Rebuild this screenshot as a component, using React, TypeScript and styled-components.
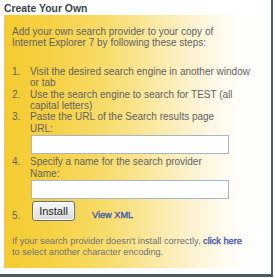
import React from "react"
import styled, { createGlobalStyle } from "styled-components"

const Global = createGlobalStyle`
  html, body {
    margin: 0;
    padding: 0;
    background: #ffffff;
  }
`

const Frame = styled.div`
  width: 271px;
  height: 274px;
  background: #ffffff;
  border-right: 2px solid #4e5a66;
  border-bottom: 3px solid #4e5a66;
  box-sizing: content-box;
  font-family: "Liberation Sans", Arial, sans-serif;
  display: flex;
  flex-direction: column;
`

const Heading = styled.h3`
  margin: 3px 0 0 4px;
  font-size: 10.4px;
  line-height: 12px;
  font-weight: bold;
  color: #3a434c;
`

const Panel = styled.div`
  margin: 0 0 0 4px;
  width: 263px;
  height: 253px;
  box-sizing: border-box;
  padding: 11px 0 0 8px;
  background: linear-gradient(
    to right,
    #f4cb30 0%,
    #f6d247 20%,
    #f8dd6f 40%,
    #fbebad 60%,
    #fdf7e2 78%,
    #fffefb 90%,
    #ffffff 100%
  );
  color: #626262;
  font-size: 10px;
  line-height: 11.4px;
`

const Intro = styled.p`
  margin: 0 0 17px 0;
`

const Steps = styled.ol`
  margin: 0;
  padding: 0;
  list-style: none;
  display: flex;
  flex-direction: column;
`

const Step = styled.li<{ $gap?: number }>`
  display: grid;
  grid-template-columns: 18px 1fr;
  margin-top: ${p => p.$gap ?? 0}px;
`

const Num = styled.span<{ $bottom?: boolean }>`
  white-space: nowrap;
  align-self: ${p => (p.$bottom ? "end" : "start")};
`

const Body = styled.div`
  display: flex;
  flex-direction: column;
`

const Field = styled.input`
  width: 198px;
  height: 19px;
  box-sizing: border-box;
  margin: 1px 0 0 1px;
  border: 1px solid #a7b7c8;
  background: #ffffff;
  outline: none;
`

const InstallRow = styled.div`
  display: flex;
  align-items: flex-end;
  gap: 17px;
`

const InstallButton = styled.button`
  width: 43px;
  height: 20px;
  margin-left: 2px;
  padding: 0;
  border: 1px solid #6f6f6f;
  border-radius: 3px;
  background: linear-gradient(to bottom, #f8f8f8 0%, #ececec 50%, #dadada 100%);
  box-shadow: inset 0 0 0 1px #ffffff;
  font-family: "Liberation Sans", Arial, sans-serif;
  font-size: 11px;
  color: #1e1e1e;
`

const Link = styled.a<{ $size?: number }>`
  color: #3f58ad;
  text-decoration: none;
  -webkit-text-stroke: 0.35px #3f58ad;
  ${p => (p.$size ? `font-size: ${p.$size}px;` : "")}
`

const Footer = styled.p`
  margin: 15px 0 0 0;
  color: #727272;
  font-size: 9.2px;
`

export default function App() {
  return (
    <>
      <Global />
      <Frame>
        <Heading>Create Your Own</Heading>
        <Panel>
          <Intro>
            Add your own search provider to your copy of
            <br />
            Internet Explorer 7 by following these steps:
          </Intro>
          <Steps>
            <Step>
              <Num>1.</Num>
              <Body>
                <span>Visit the desired search engine in another window</span>
                <span>or tab</span>
              </Body>
            </Step>
            <Step>
              <Num>2.</Num>
              <Body>
                <span>Use the search engine to search for TEST (all</span>
                <span>capital letters)</span>
              </Body>
            </Step>
            <Step>
              <Num>3.</Num>
              <Body>
                <span>Paste the URL of the Search results page</span>
                <span>URL:</span>
                <Field type="text" />
              </Body>
            </Step>
            <Step $gap={2}>
              <Num>4.</Num>
              <Body>
                <span>Specify a name for the search provider</span>
                <span>Name:</span>
                <Field type="text" />
              </Body>
            </Step>
            <Step $gap={2}>
              <Num $bottom>5.</Num>
              <InstallRow>
                <InstallButton>Install</InstallButton>
                <Link href="#" $size={9.2}>View XML</Link>
              </InstallRow>
            </Step>
          </Steps>
          <Footer>
            If your search provider doesn't install correctly,{" "}
            <Link href="#">click here</Link>
            <br />
            to select another character encoding.
          </Footer>
        </Panel>
      </Frame>
    </>
  )
}
